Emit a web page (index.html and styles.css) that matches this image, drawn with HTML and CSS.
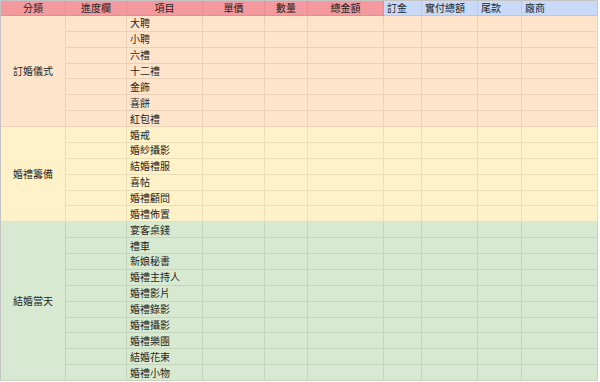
FILE: index.html
```html
<!DOCTYPE html>
<html lang="zh-Hant">
<head>
<meta charset="utf-8">
<link rel="stylesheet" href="styles.css">
</head>
<body>
<div class="sheet">
  <div class="row head">
    <div class="c pk ctr">分類</div>
    <div class="c pk ctr">進度欄</div>
    <div class="c pk ctr">項目</div>
    <div class="c pk ctr">單價</div>
    <div class="c pk ctr">數量</div>
    <div class="c pk ctr">總金額</div>
    <div class="c bl">訂金</div>
    <div class="c bl">實付總額</div>
    <div class="c bl">尾款</div>
    <div class="c bl">廠商</div>
  </div>

  <div class="row o"><div class="c cat cat7">訂婚儀式</div><div class="c"></div><div class="c item">大聘</div><div class="c"></div><div class="c"></div><div class="c"></div><div class="c"></div><div class="c"></div><div class="c"></div><div class="c"></div></div>
  <div class="row o"><div class="c"></div><div class="c item">小聘</div><div class="c"></div><div class="c"></div><div class="c"></div><div class="c"></div><div class="c"></div><div class="c"></div><div class="c"></div></div>
  <div class="row o"><div class="c"></div><div class="c item">六禮</div><div class="c"></div><div class="c"></div><div class="c"></div><div class="c"></div><div class="c"></div><div class="c"></div><div class="c"></div></div>
  <div class="row o"><div class="c"></div><div class="c item">十二禮</div><div class="c"></div><div class="c"></div><div class="c"></div><div class="c"></div><div class="c"></div><div class="c"></div><div class="c"></div></div>
  <div class="row o"><div class="c"></div><div class="c item">金飾</div><div class="c"></div><div class="c"></div><div class="c"></div><div class="c"></div><div class="c"></div><div class="c"></div><div class="c"></div></div>
  <div class="row o"><div class="c"></div><div class="c item">喜餅</div><div class="c"></div><div class="c"></div><div class="c"></div><div class="c"></div><div class="c"></div><div class="c"></div><div class="c"></div></div>
  <div class="row o"><div class="c"></div><div class="c item">紅包禮</div><div class="c"></div><div class="c"></div><div class="c"></div><div class="c"></div><div class="c"></div><div class="c"></div><div class="c"></div></div>

  <div class="row y"><div class="c cat cat6">婚禮籌備</div><div class="c"></div><div class="c item">婚戒</div><div class="c"></div><div class="c"></div><div class="c"></div><div class="c"></div><div class="c"></div><div class="c"></div><div class="c"></div></div>
  <div class="row y"><div class="c"></div><div class="c item">婚紗攝影</div><div class="c"></div><div class="c"></div><div class="c"></div><div class="c"></div><div class="c"></div><div class="c"></div><div class="c"></div></div>
  <div class="row y"><div class="c"></div><div class="c item">結婚禮服</div><div class="c"></div><div class="c"></div><div class="c"></div><div class="c"></div><div class="c"></div><div class="c"></div><div class="c"></div></div>
  <div class="row y"><div class="c"></div><div class="c item">喜帖</div><div class="c"></div><div class="c"></div><div class="c"></div><div class="c"></div><div class="c"></div><div class="c"></div><div class="c"></div></div>
  <div class="row y"><div class="c"></div><div class="c item">婚禮顧問</div><div class="c"></div><div class="c"></div><div class="c"></div><div class="c"></div><div class="c"></div><div class="c"></div><div class="c"></div></div>
  <div class="row y"><div class="c"></div><div class="c item">婚禮佈置</div><div class="c"></div><div class="c"></div><div class="c"></div><div class="c"></div><div class="c"></div><div class="c"></div><div class="c"></div></div>

  <div class="row g"><div class="c cat cat10">結婚當天</div><div class="c"></div><div class="c item">宴客桌錢</div><div class="c"></div><div class="c"></div><div class="c"></div><div class="c"></div><div class="c"></div><div class="c"></div><div class="c"></div></div>
  <div class="row g"><div class="c"></div><div class="c item">禮車</div><div class="c"></div><div class="c"></div><div class="c"></div><div class="c"></div><div class="c"></div><div class="c"></div><div class="c"></div></div>
  <div class="row g"><div class="c"></div><div class="c item">新娘秘書</div><div class="c"></div><div class="c"></div><div class="c"></div><div class="c"></div><div class="c"></div><div class="c"></div><div class="c"></div></div>
  <div class="row g"><div class="c"></div><div class="c item">婚禮主持人</div><div class="c"></div><div class="c"></div><div class="c"></div><div class="c"></div><div class="c"></div><div class="c"></div><div class="c"></div></div>
  <div class="row g"><div class="c"></div><div class="c item">婚禮影片</div><div class="c"></div><div class="c"></div><div class="c"></div><div class="c"></div><div class="c"></div><div class="c"></div><div class="c"></div></div>
  <div class="row g"><div class="c"></div><div class="c item">婚禮錄影</div><div class="c"></div><div class="c"></div><div class="c"></div><div class="c"></div><div class="c"></div><div class="c"></div><div class="c"></div></div>
  <div class="row g"><div class="c"></div><div class="c item">婚禮攝影</div><div class="c"></div><div class="c"></div><div class="c"></div><div class="c"></div><div class="c"></div><div class="c"></div><div class="c"></div></div>
  <div class="row g"><div class="c"></div><div class="c item">婚禮樂團</div><div class="c"></div><div class="c"></div><div class="c"></div><div class="c"></div><div class="c"></div><div class="c"></div><div class="c"></div></div>
  <div class="row g"><div class="c"></div><div class="c item">結婚花束</div><div class="c"></div><div class="c"></div><div class="c"></div><div class="c"></div><div class="c"></div><div class="c"></div><div class="c"></div></div>
  <div class="row g"><div class="c"></div><div class="c item">婚禮小物</div><div class="c"></div><div class="c"></div><div class="c"></div><div class="c"></div><div class="c"></div><div class="c"></div><div class="c"></div></div>
</div>
</body>
</html>
```

FILE: styles.css
```css
html, body {
  margin: 0;
  padding: 0;
  background: #ffffff;
}

body {
  font-family: "Noto Sans CJK TC", "Noto Sans CJK SC", "Liberation Sans", sans-serif;
  font-size: 10px;
  color: #1e1e1e;
}

.sheet {
  display: grid;
  grid-template-columns: 65px 61px 76px 62px 43px 76px 38px 56px 44px 76px;
  grid-template-rows: 15px repeat(23, minmax(0, 1fr));
  height: 380px;
  width: 597px;
  border-top: 1px solid #c4c4c4;
  border-left: 1px solid #c4c4c4;
}

.row {
  display: contents;
}

.c {
  box-sizing: border-box;
  border-right: 1px solid transparent;
  border-bottom: 1px solid transparent;
  display: flex;
  align-items: center;
  overflow: hidden;
  white-space: nowrap;
  line-height: 1;
}

.head .pk {
  background: #f4999d;
  border-right-color: #e58d90;
  border-bottom-color: #e68b8f;
}

.head .bl {
  background: #c9daf8;
  border-right-color: #b9c9e4;
  border-bottom-color: #b7c7e4;
  padding-left: 3px;
}

.ctr {
  justify-content: center;
}

.item {
  padding-left: 3px;
}

.cat {
  justify-content: center;
}

.cat7 { grid-row: span 7; }
.cat6 { grid-row: span 6; }
.cat10 { grid-row: span 10; }

.o .c {
  background: #fde4cb;
  border-right-color: #ecd1b9;
  border-bottom-color: #ecd1b9;
}

.y .c {
  background: #fff2c9;
  border-right-color: #ebdfba;
  border-bottom-color: #ebdfba;
}

.g .c {
  background: #d7ead1;
  border-right-color: #c3d6bd;
  border-bottom-color: #c3d6bd;
}
```
